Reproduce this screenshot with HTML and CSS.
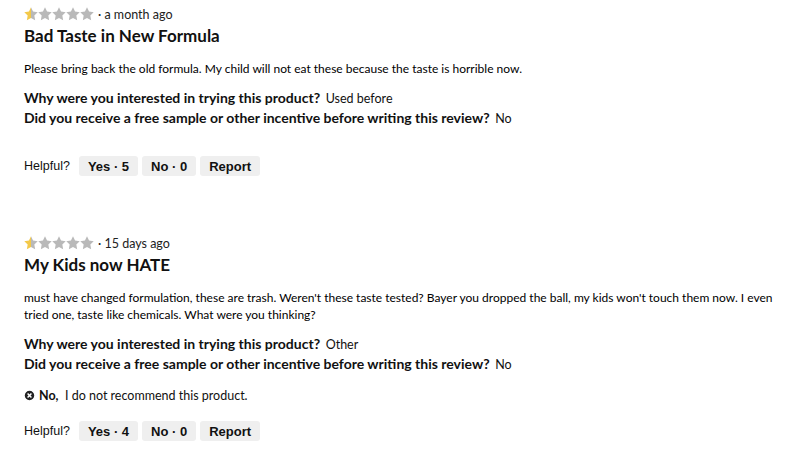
FILE: index.html
```html
<!DOCTYPE html>
<html lang="en">
<head>
  <meta charset="UTF-8" />
  <title>Reviews</title>
  <link rel="stylesheet" href="styles.css">
</head>
<body>

<svg width="0" height="0" class="defs">
  <defs>
    <symbol id="star" viewBox="0 0 24 24">
      <path d="M12 .6l3.5 7.3 8 1.1-5.8 5.6 1.4 8-7.1-3.8-7.1 3.8 1.4-8L.5 9l8-1.1z"/>
    </symbol>
    <linearGradient id="half">
      <stop offset="50%" stop-color="#f3c94a"/>
      <stop offset="50%" stop-color="#b9b9b9"/>
    </linearGradient>
  </defs>
</svg>

<div class="review">
  <div class="meta">
    <span class="stars">
      <svg class="star half"><use href="#star"/></svg><svg class="star"><use href="#star"/></svg><svg class="star"><use href="#star"/></svg><svg class="star"><use href="#star"/></svg><svg class="star"><use href="#star"/></svg>
    </span>
    <span class="date">· a month ago</span>
  </div>
  <h3 class="title">Bad Taste in New Formula</h3>
  <p class="text">Please bring back the old formula. My child will not eat these because the taste is horrible now.</p>
  <div class="questions">
    <div class="q"><strong>Why were you interested in trying this product?</strong> <span>Used before</span></div>
    <div class="q"><strong>Did you receive a free sample or other incentive before writing this review?</strong> <span>No</span></div>
  </div>
  <div class="helpful">
    <span class="label">Helpful?</span>
    <button>Yes · 5</button>
    <button>No · 0</button>
    <button>Report</button>
  </div>
</div>

<div class="review">
  <div class="meta">
    <span class="stars">
      <svg class="star half"><use href="#star"/></svg><svg class="star"><use href="#star"/></svg><svg class="star"><use href="#star"/></svg><svg class="star"><use href="#star"/></svg><svg class="star"><use href="#star"/></svg>
    </span>
    <span class="date">· 15 days ago</span>
  </div>
  <h3 class="title">My Kids now HATE</h3>
  <p class="text">must have changed formulation, these are trash. Weren't these taste tested? Bayer you dropped the ball, my kids won't touch them now. I even tried one, taste like chemicals. What were you thinking?</p>
  <div class="questions">
    <div class="q"><strong>Why were you interested in trying this product?</strong> <span>Other</span></div>
    <div class="q"><strong>Did you receive a free sample or other incentive before writing this review?</strong> <span>No</span></div>
  </div>
  <div class="recommend">
    <svg class="x-icon" viewBox="0 0 16 16"><circle cx="8" cy="8" r="8"/><path d="M5.2 5.2l5.6 5.6M10.8 5.2l-5.6 5.6"/></svg>
    <strong>No,</strong>&nbsp; I do not recommend this product.
  </div>
  <div class="helpful">
    <span class="label">Helpful?</span>
    <button>Yes · 4</button>
    <button>No · 0</button>
    <button>Report</button>
  </div>
</div>

</body>
</html>
```

FILE: styles.css
```css
body {
  margin: 0;
  padding: 0 24px;
  font-family: Lato, 'Open Sans', sans-serif;
  color: #111;
  background: white;
}

.defs {
  position: absolute;
}

.review {
  padding-top: 6px;
  margin-bottom: 53px;
}

.meta {
  display: flex;
  align-items: center;
  height: 16px;
}

.stars {
  display: flex;
}

.star {
  width: 14px;
  height: 14px;
  fill: #b9b9b9;
}

.star.half {
  fill: url(#half);
}

.date {
  margin-left: 4px;
  font-size: 12.5px;
  color: #222;
}

.title {
  margin: 4px 0 0;
  font-size: 17px;
  font-weight: bold;
  line-height: 20px;
}

.text {
  margin: 14px 0 0;
  font-size: 12px;
  line-height: 17px;
  color: #000;
}

.questions {
  margin-top: 11px;
}

.q {
  font-size: 14px;
  line-height: 19px;
}

.q span {
  font-size: 12.5px;
  margin-left: 2px;
}

.recommend {
  margin-top: 14px;
  font-size: 12.5px;
  display: flex;
  align-items: center;
}

.x-icon {
  width: 11px;
  height: 11px;
  margin-right: 4px;
  fill: #222;
  stroke: white;
  stroke-width: 2.2;
}

.helpful {
  display: flex;
  align-items: center;
  gap: 4px;
  margin-top: 28px;
  font-family: 'Liberation Sans', Arial, sans-serif;
  font-size: 12.5px;
}

.recommend + .helpful {
  margin-top: 18px;
}

.helpful .label {
  margin-right: 5px;
}

.helpful button {
  font-family: inherit;
  font-size: 13px;
  font-weight: bold;
  color: #111;
  background: #efefef;
  border: none;
  border-radius: 3px;
  height: 20px;
  padding: 0 9px;
}
```
